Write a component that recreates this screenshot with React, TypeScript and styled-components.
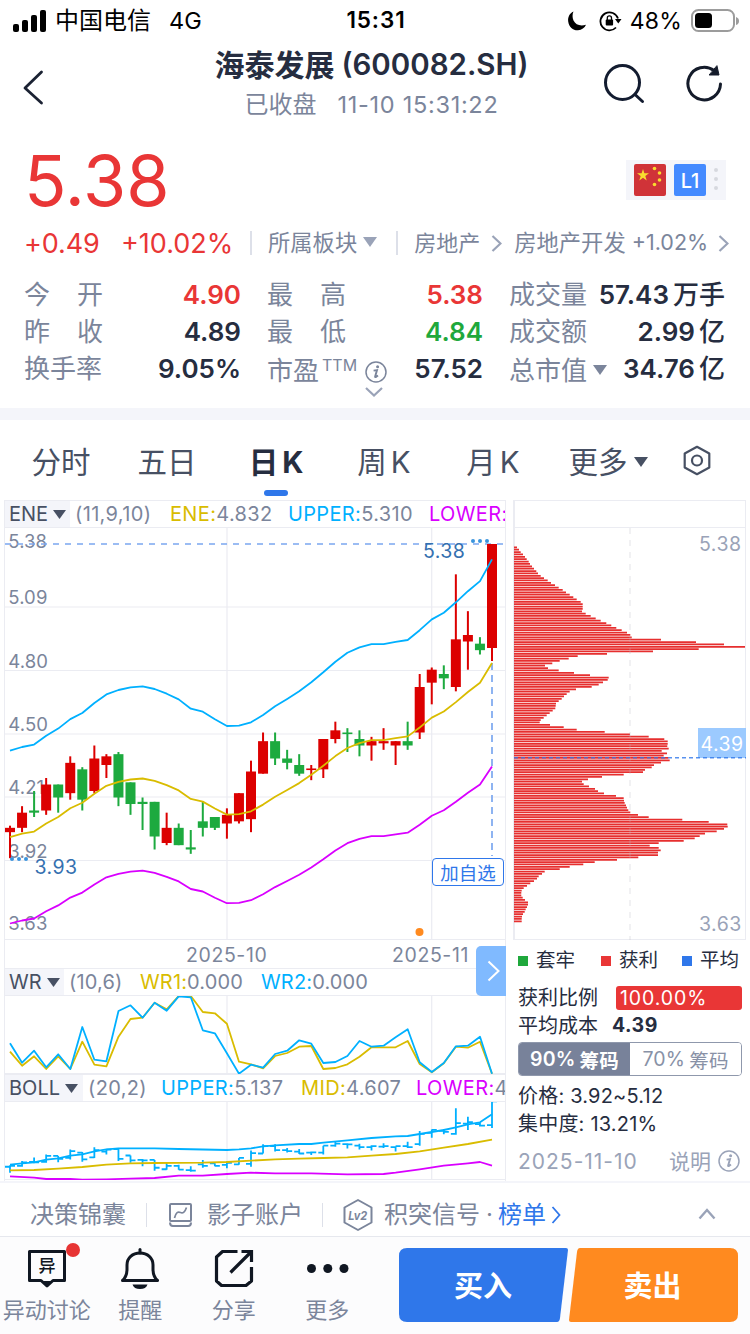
import React from 'react';
import styled, { createGlobalStyle } from 'styled-components';

const c = {
  ink: '#262d40',
  slate: '#475063',
  mute: '#7b859b',
  faint: '#9aa3b8',
  red: '#e93636',
  green: '#1fa83c',
  blue: '#2f77ea',
  cyan: '#00b0ff',
  gold: '#d9bc00',
  pink: '#d900ff',
  candleRed: '#dc0000',
  candleGreen: '#1daa3f',
  line: '#ebecf2',
  band: '#f4f5fa',
};

const Global = createGlobalStyle`
  * { box-sizing: border-box; }
  body { margin: 0; background: #fff; }
  svg { display: block; flex: none; }
`;

const Screen = styled.div`
  width: 750px;
  height: 1334px;
  display: flex;
  flex-direction: column;
  overflow: hidden;
  background: #fff;
  color: ${c.ink};
  font-family: Inter, 'Noto Sans CJK SC', sans-serif;
`;

const Label = styled.span<{ $size: number; $color?: string; $weight?: number; $ls?: number; $ml?: number; $w?: number; $dy?: number }>`
  font-size: ${p => p.$size}px;
  line-height: 1;
  color: ${p => p.$color ?? c.ink};
  font-weight: ${p => p.$weight ?? 400};
  letter-spacing: ${p => p.$ls ?? 0}px;
  margin-left: ${p => p.$ml ?? 0}px;
  margin-top: ${p => p.$dy ?? 0}px;
  ${p => (p.$w ? `width: ${p.$w}px;` : '')}
  flex: none;
  white-space: pre;
`;

const StatusBar = styled.header`
  height: 42px;
  flex: none;
  display: grid;
  grid-template-columns: 1fr auto 1fr;
  align-items: center;
  padding: 0 11px 1px 13px;
`;
const StatusSide = styled.div<{ $end?: boolean }>`
  display: flex;
  align-items: center;
  justify-content: ${p => (p.$end ? 'flex-end' : 'flex-start')};
`;

const TitleBar = styled.div`
  height: 88px;
  flex: none;
  display: flex;
  align-items: flex-start;
  padding-left: 22px;
`;
const TitleBlock = styled.div`
  width: 330px;
  margin-left: 163px;
  display: flex;
  flex-direction: column;
  align-items: center;
  padding: 6px 1px 0 0;
`;
const TitleLine = styled.div<{ $h: number }>`
  display: flex;
  align-items: center;
  justify-content: center;
  height: ${p => p.$h}px;
`;
const IconSlot = styled.div<{ $ml?: number; $mt?: number }>`
  margin-left: ${p => p.$ml ?? 0}px;
  margin-top: ${p => p.$mt ?? 0}px;
  flex: none;
`;

const Quote = styled.section`
  height: 278px;
  flex: none;
  padding: 16px 24px 0;
`;
const PriceRow = styled.div`
  height: 68px;
  display: flex;
  align-items: center;
  justify-content: space-between;
`;
const BadgeBox = styled.div`
  width: 100px;
  height: 40px;
  background: ${c.band};
  display: flex;
  align-items: center;
  gap: 8px;
  padding-left: 8px;
`;
const LevelBadge = styled.div`
  width: 32px;
  height: 32px;
  border-radius: 2px;
  background: #448aff;
  color: #fff;
  font-size: 20px;
  font-weight: 500;
  padding-top: 1px;
  display: flex;
  align-items: center;
  justify-content: center;
`;
const ChangeRow = styled.div`
  height: 30px;
  margin-top: 14px;
  display: flex;
  align-items: center;
`;
const Divider = styled.i<{ $ml: number; $w?: number }>`
  width: ${p => p.$w ?? 2}px;
  height: 24px;
  margin-left: ${p => p.$ml}px;
  background: #dde0e9;
  flex: none;
`;
const StatGrid = styled.div`
  display: grid;
  grid-template-columns: 217px 216px 217px;
  column-gap: 26px;
  grid-auto-rows: 37px;
  margin-top: 18px;
`;
const Stat = styled.div`
  display: flex;
  align-items: center;
  justify-content: space-between;
`;
const StatName = styled.span<{ $drop?: boolean }>`
  width: 79px;
  display: flex;
  align-items: center;
  justify-content: space-between;
  white-space: nowrap;
  font-size: 26px;
  line-height: 1;
  color: ${c.mute};
  padding-top: ${p => (p.$drop ? 5 : 0)}px;
`;
const StatValue = styled.span<{ $color?: string }>`
  font-size: 26px;
  line-height: 1;
  font-weight: 600;
  color: ${p => p.$color ?? c.ink};
  white-space: nowrap;
  & > em { font-style: normal; font-weight: 500; margin: 0 1px 0 4px; }
`;
const Sup = styled.sup`
  font-size: 16px;
  line-height: 1;
  margin: -12px 0 0 3px;
  vertical-align: baseline;
`;
const ExpandRow = styled.div`
  display: flex;
  justify-content: center;
  padding-right: 2px;
`;
const Band = styled.div`
  height: 12px;
  flex: none;
  background: ${c.band};
`;

const Tabs = styled.nav`
  height: 80px;
  flex: none;
  display: flex;
  padding: 0 0 0 31px;
`;
const Tab = styled.div<{ $active?: boolean; $w: number; $mr: number }>`
  width: ${p => p.$w}px;
  margin-right: ${p => p.$mr}px;
  height: 76px;
  padding-top: 26.500px;
  display: flex;
  flex-direction: column;
  align-items: center;
  justify-content: space-between;
  font-size: 29.500px;
  line-height: 30px;
  white-space: nowrap;
  color: ${p => (p.$active ? c.ink : c.slate)};
  font-weight: ${p => (p.$active ? 700 : 400)};
  & > i { width: 24px; height: 6px; border-radius: 3px; background: ${c.blue}; }
`;
const TabText = styled.span<{ $gap?: number }>`
  display: flex;
  align-items: center;
  gap: ${p => p.$gap ?? 4}px;
`;

const Charts = styled.main`
  height: 681px;
  flex: none;
  display: flex;
  padding-left: 4px;
`;
const KColumn = styled.div`
  width: 502px;
  border-left: 1px solid ${c.line};
  border-right: 1px solid ${c.line};
  flex: none;
`;
const Indicator = styled.div<{ $ls: number }>`
  height: 28px;
  display: flex;
  align-items: center;
  overflow: hidden;
  border-top: 1px solid ${c.line};
  border-bottom: 1px solid ${c.line};
  font-size: 20px;
  letter-spacing: ${p => p.$ls}px;
  white-space: nowrap;
  color: ${c.mute};
`;
const IndicatorPick = styled.div<{ $w: number }>`
  width: ${p => p.$w}px;
  height: 100%;
  background: ${c.band};
  color: ${c.slate};
  display: flex;
  align-items: center;
  gap: 5px;
  padding-left: 4px;
  flex: none;
  letter-spacing: 0;
`;
const Param = styled.span<{ $w: number }>`
  margin-left: 5px;
  width: ${p => p.$w}px;
  flex: none;
`;
const Reading = styled.span<{ $color: string; $w?: number }>`
  ${p => (p.$w ? `width: ${p.$w}px;` : '')}
  flex: none;
  & > b { font-weight: 400; color: ${p => p.$color}; }
`;
const DateAxis = styled.div`
  height: 28px;
  padding-top: 3px;
  display: flex;
  align-items: center;
  position: relative;
`;
const NextButton = styled.div`
  position: absolute;
  right: -1px;
  top: 6px;
  width: 30px;
  height: 50px;
  border-radius: 5px 0 0 5px;
  background: #80baff;
  display: flex;
  align-items: center;
  justify-content: center;
  padding-left: 4px;
`;
const ChartFrame = styled.div`
  position: relative;
`;
const AddButton = styled.div`
  position: absolute;
  right: 1px;
  top: 330px;
  width: 72px;
  height: 28px;
  border: 1px solid ${c.blue};
  border-radius: 4px;
  background: #fff;
  color: ${c.blue};
  font-size: 18.5px;
  line-height: 29px;
  text-align: center;
  white-space: nowrap;
`;

const ChipColumn = styled.aside`
  width: 234px;
  margin-left: 7px;
  flex: none;
`;
const ChipHead = styled.div`
  height: 28px;
  width: 233px;
  border: 1px solid ${c.line};
  border-width: 1px 1px 1px 2px;
`;
const Legend = styled.div`
  display: flex;
  height: 41px;
  align-items: center;
  padding: 1px 0 0 5px;
`;
const Swatch = styled.i<{ $color: string; $ml?: number }>`
  width: 10px;
  height: 10px;
  margin-left: ${p => p.$ml ?? 0}px;
  background: ${p => p.$color};
`;
const ChipRow = styled.div<{ $h: number }>`
  height: ${p => p.$h}px;
  padding-left: 5px;
  display: flex;
  align-items: center;
`;
const ProfitBar = styled.div`
  width: 126px;
  height: 24px;
  margin-left: 17px;
  border-radius: 3px;
  background: ${c.red};
  color: #fff;
  font-size: 19.5px;
  line-height: 25px;
  padding-left: 4px;
  letter-spacing: 0.9px;
`;
const Toggle = styled.div`
  display: flex;
  width: 224px;
  height: 34px;
  margin: 5px 0 6px 5px;
  border: 1px solid #8f98ac;
  border-radius: 4px;
  overflow: hidden;
`;
const ToggleHalf = styled.div<{ $on?: boolean }>`
  flex: 1;
  display: flex;
  align-items: center;
  justify-content: center;
  background: ${p => (p.$on ? '#78829a' : '#fff')};
  color: ${p => (p.$on ? '#fff' : '#8891a6')};
  font-weight: ${p => (p.$on ? 600 : 400)};
  font-size: 19.5px;
  letter-spacing: 0.2px;
  gap: 4px;
  white-space: nowrap;
`;

const StrategyBar = styled.div`
  height: 55px;
  flex: none;
  display: flex;
  align-items: center;
  padding: 11px 0 0 30px;
  border-top: 2px solid ${c.band};
`;
const ActionBar = styled.footer`
  height: 98px;
  flex: none;
  border-top: 1px solid #e6e8ee;
  background: #fcfcfd;
  display: flex;
`;
const Action = styled.div`
  width: 93.5px;
  padding-top: 10px;
  display: flex;
  flex-direction: column;
  align-items: center;
  gap: 7px;
  font-size: 22px;
  line-height: 24px;
  color: ${c.mute};
  white-space: nowrap;
  & > svg { overflow: visible; }
`;
const TradeButtons = styled.div`
  display: grid;
  width: 339px;
  height: 74px;
  margin: 11px 0 0 25px;
  & > * { grid-area: 1 / 1; }
`;
const TradeNames = styled.div`
  display: grid;
  grid-template-columns: 168px 171px;
  align-items: center;
  justify-items: center;
  color: #fff;
  font-size: 29px;
  font-weight: 600;
  padding-bottom: 2px;
`;

/* [open, close, high, low] in cents */
const candles: number[][] = [
  [405, 407, 408, 393], [407, 414, 417, 405], [415, 414, 424, 412], [415, 427, 430, 413], [427, 421, 427, 414],
  [423, 437, 440, 420], [434, 420, 435, 415], [424, 439, 445, 423], [436, 440, 441, 430], [441, 421, 442, 417],
  [428, 418, 428, 413], [419, 418, 421, 406], [419, 403, 419, 397], [400, 407, 414, 399], [407, 399, 409, 399],
  [398, 397, 406, 395], [410, 407, 419, 403], [412, 407, 412, 406], [409, 413, 416, 402], [410, 423, 423, 409],
  [411, 433, 438, 405], [432, 447, 451, 432], [447, 439, 451, 436], [439, 437, 443, 434], [436, 432, 441, 431],
  [434, 434.4, 436, 429], [434, 448, 448, 430], [448, 452, 456, 446], [451, 450.5, 453, 442], [448, 445, 452, 440],
  [445, 447, 449, 438], [446, 447, 453, 443], [445, 447, 447, 436], [447, 445, 456, 443], [451, 472, 478, 448],
  [474, 480, 481, 464], [478, 476, 482, 471], [472, 494, 524, 470], [493, 496, 507, 480], [492, 489, 495, 487],
  [490, 538, 538, 484],
];
const eneUpper = [
  442.6, 444.3, 445.4, 449.5, 452.8, 457.2, 460, 464.6, 468.6, 470.6, 471.8, 472.3, 471.1, 468.9, 466.3, 462, 460.6,
  457.1, 454, 454.2, 455.7, 459.1, 463.1, 466.5, 470, 474.2, 478.8, 483.7, 487.8, 490.3, 491.8, 491.8, 492.8, 493.7,
  498.2, 503.2, 506.3, 511.1, 516.2, 520.9, 530.9,
];
/* both WR series use thirds of a pixel below the panel top */
const wr1 = [
  167, 209, 181, 219, 181, 219, 137, 206, 211, 122, 69, 65, 20, 40, 0, 0, 48, 52, 83, 197, 205, 217, 180, 171, 152, 150,
  219, 216, 205, 182, 154, 154, 154, 135, 204, 229, 202, 152, 155, 137, 233,
];
const wr2 = [
  142, 200, 164, 214, 175, 219, 93, 191, 196, 45, 28, 65, 20, 44, 1, 4, 103, 112, 172, 233, 206, 215, 174, 164, 133, 143,
  201, 198, 180, 135, 152, 149, 124, 100, 199, 228, 201, 151, 149, 122, 233,
];
/* [candle index, offset] knots */
const bollUpper = [[0, 188], [1, 184], [2, 181], [3, 173], [4, 169], [5, 161], [6, 157], [7, 148], [8, 142], [9, 139], [12, 139], [14, 141], [18, 144], [19, 142], [20, 139], [21, 133], [22, 130], [24, 126], [25, 126], [26, 122], [28, 115], [30, 108], [32, 103], [33, 102], [34, 96], [36, 84], [37, 76], [38, 67], [39, 61], [40, 37]];
const bollMid = [[0, 205], [2, 204], [4, 200], [6, 195], [8, 188], [10, 184], [12, 183], [16, 182], [18, 180], [20, 176], [22, 172], [24, 170], [26, 168], [28, 166], [30, 161], [32, 156], [34, 148], [36, 137], [38, 126], [40, 113]];
const bollLow = [[0, 223], [2, 227], [3, 231], [5, 231], [6, 233], [8, 232], [10, 230], [12, 228], [14, 221], [16, 221], [18, 216], [20, 212], [22, 214], [25, 214], [28, 217], [31, 216], [32, 212], [34, 202], [36, 191], [38, 184], [39, 180], [40, 191]];

const chips = [
  36, 42, 47, 54, 60, 65, 71, 75, 81, 87, 94, 99, 107, 117, 128, 138, 150, 161, 173, 183, 194, 205, 215, 227, 233, 233,
  233, 231, 242, 257, 272, 287, 304, 319, 334, 350, 366, 376, 380, 468, 573, 657, 720, 581, 444, 306, 218, 191, 164, 142,
  120, 129, 161, 207, 255, 311, 308, 294, 281, 260, 213, 194, 185, 177, 170, 161, 153, 152, 151, 143, 134, 125, 116, 107,
  104, 135, 176, 215, 299, 375, 431, 478, 488, 488, 487, 491, 470, 486, 476, 490, 494, 468, 447, 440, 420, 414, 356, 291,
  249, 231, 236, 252, 270, 279, 297, 333, 356, 357, 359, 363, 366, 370, 376, 399, 431, 532, 611, 667, 668, 657, 635, 600,
  584, 569, 536, 461, 434, 461, 467, 459, 459, 400, 336, 269, 235, 194, 164, 119, 111, 101, 96, 87, 76, 66, 56, 50, 49,
  49, 53, 60, 69, 69, 66, 62, 59, 54, 51, 50, 50,
];

const X = (i: number) => 5 + 12.05 * i;
const Y = (v: number) => 16 + (538 - v) * 2.1667;
const poly = (pts: number[][]) => pts.map(([x, y]) => `${x.toFixed(1)},${y.toFixed(1)}`).join(' ');

function Triangle({ w = 14, h = 10, color = c.slate }: { w?: number; h?: number; color?: string }) {
  return (
    <svg width={w} height={h} viewBox="0 0 14 10" preserveAspectRatio="none">
      <path d="M0 0H14L7 10Z" fill={color} />
    </svg>
  );
}

function Chevron({ w, h, color, sw = 2.2 }: { w: number; h: number; color: string; sw?: number }) {
  return (
    <svg width={w} height={h} viewBox={`0 0 ${w} ${h}`} fill="none" stroke={color} strokeWidth={sw}>
      <path d={`M1.5 1L${w - 1.5} ${h / 2}L1.5 ${h - 1}`} />
    </svg>
  );
}

function InfoIcon({ color }: { color: string }) {
  return (
    <svg width="22" height="22" viewBox="0 0 22 22" fill="none" stroke={color}>
      <circle cx="11" cy="11" r="10" strokeWidth="1.5" />
      <circle cx="12.6" cy="5.8" r="1.5" fill={color} stroke="none" />
      <path d="M8.6 9.6L12 9.1L10.1 15.8Q10 16.8 13 14.6" strokeWidth="1.9" />
    </svg>
  );
}

function MainChart() {
  const line = (k: number) => poly(eneUpper.map((v, i) => [X(i), Y((v / 1.11) * k)]));
  return (
    <svg width="500" height="412" viewBox="0 0 500 412" fontFamily="Inter, sans-serif">
      <g stroke={c.line} strokeWidth="1.2">
        {[79, 142.5, 206, 269, 332.5, 411.5].map(y => <path key={y} d={`M0 ${y}H500`} />)}
        <path d="M222 0V412M426.7 0V412" />
      </g>
      <g fontSize="18.5" fill={c.mute} letterSpacing="0.1">
        <text x="3.300" y="19.500">5.38</text>
        <text x="3.300" y="75.500">5.09</text>
        <text x="3.300" y="139.500">4.80</text>
        <text x="3.300" y="202.500">4.50</text>
        <text x="3.300" y="265.500">4.21</text>
        <text x="3.300" y="329.500">3.92</text>
        <text x="3.300" y="401.500">3.63</text>
      </g>
      <path d="M0 16H500" stroke="#7ba7ef" strokeWidth="1.6" strokeDasharray="6 6" />
      <path d="M487 135V328" stroke="#7ba7ef" strokeWidth="1.7" strokeDasharray="7 5" />
      {candles.map(([o, cl, h, l], i) => {
        const color = cl >= o ? c.candleRed : c.candleGreen;
        const top = Y(Math.max(o, cl));
        const height = Math.max(1.6, Math.abs(cl - o) * 2.1667);
        return (
          <g key={i} fill={color}>
            <rect x={X(i) - 1} y={Y(h)} width="2" height={Y(l) - Y(h)} />
            <rect x={X(i) - 5} y={top} width="10" height={height} />
          </g>
        );
      })}
      <g fill="none" strokeWidth="1.8" strokeLinejoin="round">
        <polyline points={line(1.11)} stroke={c.cyan} />
        <polyline points={line(1.01)} stroke={c.gold} />
        <polyline points={line(0.91)} stroke={c.pink} />
      </g>
      <g fill="#3a94dd">
        {[7, 14, 21].map(x => <circle key={x} cx={x} cy="331" r="2" />)}
        {[468, 475, 482].map(x => <circle key={x} cx={x} cy="13" r="2" />)}
      </g>
      <g fontSize="19.5" fill="#3470b0" letterSpacing="0.4">
        <text x="29.500" y="346">3.93</text>
        <text x="418" y="30">5.38</text>
      </g>
      <circle cx="414.500" cy="404" r="4" fill="#ff8a1f" />
    </svg>
  );
}

function SubGrid() {
  return <path d="M222 0V78M426.700 0V78M0 77.500H500" stroke={c.line} strokeWidth="1.2" />;
}

function WrChart() {
  return (
    <svg width="500" height="78" viewBox="0 0 500 78">
      <SubGrid />
      <g fill="none" strokeWidth="1.8" strokeLinejoin="round">
        <polyline points={poly(wr1.map((v, i) => [X(i), v / 3]))} stroke={c.gold} />
        <polyline points={poly(wr2.map((v, i) => [X(i), v / 3]))} stroke={c.cyan} />
      </g>
    </svg>
  );
}

function BollChart() {
  const by = (v: number) => (212 - (v - 393) * 1.473) / 3;
  const knots = (k: number[][]) => poly(k.map(([i, v]) => [X(i), v / 3]));
  const bars = candles
    .map(([o, cl, h, l], i) => `M${X(i)} ${by(h)}V${by(l)}M${X(i) - 5} ${by(o)}H${X(i)}M${X(i)} ${by(cl)}H${X(i) + 5}`)
    .join('');
  return (
    <svg width="500" height="78" viewBox="0 0 500 78">
      <SubGrid />
      <g fill="none" strokeWidth="1.8" strokeLinejoin="round">
        <path d={bars} stroke={c.cyan} />
        <polyline points={knots(bollUpper)} stroke={c.cyan} />
        <polyline points={knots(bollMid)} stroke={c.gold} />
        <polyline points={knots(bollLow)} stroke={c.pink} />
      </g>
    </svg>
  );
}

function ChipChart() {
  return (
    <svg width="234" height="412" viewBox="0 0 234 412" fontFamily="Inter, sans-serif">
      <path d="M1 0V412" stroke={c.line} strokeWidth="2" />
      <path d="M232.500 0V412M0 411.500H233" stroke={c.line} />
      <path d={chips.map((v, i) => `M1 ${(19.35 + i * 2.3667).toFixed(2)}h${((v - 27) / 3).toFixed(1)}`).join('')} stroke="#e62f2f" strokeWidth="1.75" />
      <path d="M117 0V412" stroke="#b8b8c4" strokeOpacity="0.2" strokeWidth="2" strokeDasharray="6 6" />
      <rect x="185" y="200" width="48" height="30" fill="#9ccaff" />
      <path d="M1 229.700H233" stroke="#2f77ea" strokeOpacity="0.8" strokeWidth="1.5" strokeDasharray="4 3" />
      <g fontSize="19.5" letterSpacing="0.5">
        <text x="186" y="23" fill={c.faint}>5.38</text>
        <text x="186" y="403" fill={c.faint}>3.63</text>
        <text x="187.500" y="222.500" fill="#fff">4.39</text>
      </g>
    </svg>
  );
}

export default function App() {
  return (
    <Screen>
      <Global />
      <StatusBar>
        <StatusSide>
          <svg width="33" height="22" viewBox="0 0 33 22">
            <rect x="0" y="14" width="6" height="8" rx="2" />
            <rect x="9" y="10" width="6" height="12" rx="2" />
            <rect x="18" y="5" width="6" height="17" rx="2" />
            <rect x="27" y="0" width="6" height="22" rx="2" />
          </svg>
          <Label $size={24} $color="#000" $ml={9} $dy={1}>中国电信</Label>
          <Label $size={23.5} $color="#000" $ml={18}>4G</Label>
        </StatusSide>
        <Label $size={22.5} $color="#000" $weight={600} $ls={0.9}>15:31</Label>
        <StatusSide $end>
          <svg width="20" height="20" viewBox="0 0 20 20">
            <path d="M6.500 0.500C2.500 2.500 0.700 6 1.200 10.500C2 16 6 19.500 11 19.300C14.800 19 17.600 17 19 13.800C13.500 15.600 8.500 14 6.500 9.600C5.200 6.500 5.300 3.200 6.500 0.500Z" />
          </svg>
          <IconSlot $ml={12}>
            <svg width="23" height="22" viewBox="0 0 23 22" fill="none" stroke="#000" strokeWidth="1.800">
              <path d="M17 17.500A9 9 0 1 1 19 8.500" />
              <path d="M16 9H22.500L19.300 13.500Z" fill="#000" stroke="none" />
              <rect x="6.700" y="9.500" width="7.400" height="6" rx="1" fill="#000" stroke="none" />
              <path d="M8.300 10V8A2.100 2.100 0 0 1 12.500 8V10" strokeWidth="1.300" />
            </svg>
          </IconSlot>
          <Label $size={23} $color="#000" $ml={8} $ls={0.2} $dy={1}>48%</Label>
          <IconSlot $ml={9}>
            <svg width="48" height="24" viewBox="0 0 48 24">
              <rect x="1" y="1" width="42" height="21" rx="6.500" fill="none" stroke="#9c9c9c" strokeWidth="2" />
              <path d="M45 8Q48 9 48 12T45 16Z" fill="#9c9c9c" />
              <rect x="4" y="4" width="17" height="15" rx="3.500" />
            </svg>
          </IconSlot>
        </StatusSide>
      </StatusBar>

      <TitleBar>
        <IconSlot $mt={28}>
          <svg width="22" height="36" viewBox="0 0 22 36" fill="none" stroke="#1b2233" strokeWidth="2.800" strokeLinecap="round" strokeLinejoin="round">
            <path d="M19.500 2L3 18L19.500 33" />
          </svg>
        </IconSlot>
        <TitleBlock>
          <TitleLine $h={34}>
            <Label $size={30} $weight={600}>海泰发展</Label>
            <Label $size={29.5} $weight={600} $ml={7}>(600082.SH)</Label>
          </TitleLine>
          <TitleLine $h={46}>
            <Label $size={24} $color={c.mute}>已收盘</Label>
            <Label $size={23.5} $color={c.mute} $ml={21} $ls={0.7}>11-10 15:31:22</Label>
          </TitleLine>
        </TitleBlock>
        <IconSlot $ml={67} $mt={22}>
          <svg width="42" height="40" viewBox="0 0 42 40" fill="none" stroke="#131c30" strokeWidth="3" strokeLinecap="round">
            <circle cx="18.500" cy="18.500" r="17" />
            <path d="M31 30.500L38.500 37.500" />
          </svg>
        </IconSlot>
        <IconSlot $ml={39} $mt={22}>
          <svg width="38" height="38" viewBox="0 0 38 38" fill="none" stroke="#141b2a" strokeWidth="3" strokeLinecap="round">
            <path d="M35.500 20A16.300 16.300 0 1 1 29 6.500" />
            <path d="M32 2L34 11H24.500Z" fill="#141b2a" strokeWidth="1" strokeLinejoin="round" />
          </svg>
        </IconSlot>
      </TitleBar>

      <Quote>
        <PriceRow>
          <Label $size={70} $color={c.red} $dy={2}>5.38</Label>
          <BadgeBox>
            <svg width="32" height="32" viewBox="0 0 32 32">
              <rect width="32" height="32" rx="2" fill="#d03338" />
              <g fill="#f9dc2e">
                <path d="M9 5L10.400 9.300H15L11.300 12L12.700 16.500L9 13.800L5.300 16.500L6.700 12L3 9.300H7.600Z" />
                <circle cx="20.500" cy="4.500" r="1.800" />
                <circle cx="25.500" cy="9" r="1.800" />
                <circle cx="25.500" cy="16" r="1.800" />
                <circle cx="20.500" cy="20.500" r="1.800" />
              </g>
            </svg>
            <LevelBadge>L1</LevelBadge>
            <svg width="4" height="24" viewBox="0 0 4 24" fill="#d6d8de">
              <circle cx="2" cy="2" r="2" /><circle cx="2" cy="11" r="2" /><circle cx="2" cy="20" r="2" />
            </svg>
          </BadgeBox>
        </PriceRow>
        <ChangeRow>
          <Label $size={27} $color={c.red} $w={97} $ls={-0.1}>+0.49</Label>
          <Label $size={27} $color={c.red} $w={112}>+10.02%</Label>
          <Divider $ml={17} />
          <Label $size={22.3} $color={c.mute} $ml={16}>所属板块</Label>
          <IconSlot $ml={6} $mt={-2}><Triangle color={c.faint} /></IconSlot>
          <Divider $ml={19} />
          <Label $size={22} $color={c.mute} $ml={16}>房地产</Label>
          <IconSlot $ml={11}><Chevron w={11} h={17} color={c.faint} /></IconSlot>
          <Label $size={22.3} $color={c.mute} $ml={12}>房地产开发</Label>
          <Label $size={21.5} $color={c.mute} $ml={6} $w={77}>+1.02%</Label>
          <IconSlot $ml={9}><Chevron w={11} h={17} color={c.faint} /></IconSlot>
        </ChangeRow>
        <StatGrid>
          <Stat><StatName><span>今</span><span>开</span></StatName><StatValue $color={c.red}>4.90</StatValue></Stat>
          <Stat><StatName><span>最</span><span>高</span></StatName><StatValue $color={c.red}>5.38</StatValue></Stat>
          <Stat><StatName>成交量</StatName><StatValue>57.43<em>万手</em></StatValue></Stat>
          <Stat><StatName><span>昨</span><span>收</span></StatName><StatValue>4.89</StatValue></Stat>
          <Stat><StatName><span>最</span><span>低</span></StatName><StatValue $color={c.green}>4.84</StatValue></Stat>
          <Stat><StatName>成交额</StatName><StatValue>2.99<em>亿</em></StatValue></Stat>
          <Stat><StatName>换手率</StatName><StatValue>9.05%</StatValue></Stat>
          <Stat>
            <StatName $drop>
              <span>市盈</span><Sup>TTM</Sup>
              <IconSlot $ml={8} $mt={2}><InfoIcon color={c.mute} /></IconSlot>
            </StatName>
            <StatValue>57.52</StatValue>
          </Stat>
          <Stat>
            <StatName $drop>
              <span>总市值</span>
              <IconSlot $ml={6} $mt={-3}><Triangle color={c.mute} /></IconSlot>
            </StatName>
            <StatValue>34.76<em>亿</em></StatValue>
          </Stat>
        </StatGrid>
        <ExpandRow>
          <svg width="18" height="10" viewBox="0 0 18 10" fill="none" stroke={c.faint} strokeWidth="2.200">
            <path d="M1 1L9 8.500L17 1" />
          </svg>
        </ExpandRow>
      </Quote>
      <Band />

      <Tabs>
        <Tab $w={60} $mr={47}>分时</Tab>
        <Tab $w={58} $mr={54}>五日</Tab>
        <Tab $w={52} $mr={56} $active><TabText>日<span>K</span></TabText><i /></Tab>
        <Tab $w={52} $mr={57}><TabText>周<span>K</span></TabText></Tab>
        <Tab $w={52} $mr={49}><TabText>月<span>K</span></TabText></Tab>
        <Tab $w={80} $mr={34}><TabText $gap={6}>更多<Triangle /></TabText></Tab>
        <IconSlot $mt={25}>
          <svg width="30" height="31" viewBox="0 0 30 31" fill="none" stroke={c.slate} strokeWidth="2.200" strokeLinejoin="round">
            <path d="M15 1.800L27.300 8.500V22.500L15 29.200L2.700 22.500V8.500Z" />
            <circle cx="15" cy="15.500" r="5" />
          </svg>
        </IconSlot>
      </Tabs>

      <Charts>
        <KColumn>
          <Indicator $ls={0.35}>
            <IndicatorPick $w={65}>ENE<Triangle w={13} h={9} /></IndicatorPick>
            <Param $w={95}>(11,9,10)</Param>
            <Reading $color={c.gold} $w={118}><b>ENE:</b>4.832</Reading>
            <Reading $color={c.cyan} $w={141}><b>UPPER:</b>5.310</Reading>
            <Reading $color={c.pink}><b>LOWER:</b></Reading>
          </Indicator>
          <ChartFrame>
            <MainChart />
            <AddButton>加自选</AddButton>
          </ChartFrame>
          <DateAxis>
            <Label $size={19.5} $color={c.mute} $ml={181} $ls={0.6} $w={206}>2025-10</Label>
            <Label $size={19.5} $color={c.mute} $ls={0.6}>2025-11</Label>
            <NextButton>
              <svg width="13" height="22" viewBox="0 0 13 22" fill="none" stroke="#fff" strokeWidth="2">
                <path d="M1.500 1.500L11.500 11L1.500 20.500" />
              </svg>
            </NextButton>
          </DateAxis>
          <Indicator $ls={0.15}>
            <IndicatorPick $w={59}>WR<Triangle w={13} h={9} /></IndicatorPick>
            <Param $w={71}>(10,6)</Param>
            <Reading $color={c.gold} $w={121}><b>WR1:</b>0.000</Reading>
            <Reading $color={c.cyan}><b>WR2:</b>0.000</Reading>
          </Indicator>
          <WrChart />
          <Indicator $ls={0.35}>
            <IndicatorPick $w={78}>BOLL<Triangle w={13} h={9} /></IndicatorPick>
            <Param $w={73}>(20,2)</Param>
            <Reading $color={c.cyan} $w={140}><b>UPPER:</b>5.137</Reading>
            <Reading $color={c.gold} $w={115}><b>MID:</b>4.607</Reading>
            <Reading $color={c.pink}><b>LOWER:</b>4</Reading>
          </Indicator>
          <BollChart />
        </KColumn>

        <ChipColumn>
          <ChipHead />
          <ChipChart />
          <Legend>
            <Swatch $color={c.green} /><Label $size={19.5} $ml={8}>套牢</Label>
            <Swatch $color={c.red} $ml={26} /><Label $size={19.5} $ml={8}>获利</Label>
            <Swatch $color={c.blue} $ml={24} /><Label $size={19.5} $ml={8}>平均</Label>
          </Legend>
          <ChipRow $h={34}><Label $size={20} $w={81}>获利比例</Label><ProfitBar>100.00%</ProfitBar></ChipRow>
          <ChipRow $h={22}><Label $size={20}>平均成本</Label><Label $size={19.5} $weight={700} $ml={14} $ls={0.5}>4.39</Label></ChipRow>
          <Toggle>
            <ToggleHalf $on><span>90%</span>筹码</ToggleHalf>
            <ToggleHalf><span>70%</span>筹码</ToggleHalf>
          </Toggle>
          <ChipRow $h={28}><Label $size={20} $ls={0.2}>价格: 3.92~5.12</Label></ChipRow>
          <ChipRow $h={28}><Label $size={20} $ls={0.2}>集中度: 13.21%</Label></ChipRow>
          <ChipRow $h={46}>
            <Label $size={21} $color={c.faint} $w={151} $ls={1}>2025-11-10</Label>
            <Label $size={21} $color={c.faint}>说明</Label>
            <IconSlot $ml={7}><InfoIcon color={c.faint} /></IconSlot>
          </ChipRow>
        </ChipColumn>
      </Charts>

      <StrategyBar>
        <Label $size={24} $color={c.mute}>决策锦囊</Label>
        <Divider $ml={20} $w={1} />
        <IconSlot $ml={21}>
          <svg width="26" height="26" viewBox="0 0 26 26" fill="none" stroke={c.mute} strokeWidth="2">
            <rect x="2" y="2" width="21" height="17" rx="1" />
            <path d="M2 20.500Q2 24 5 24H20Q23 24 23 20.500" />
            <path d="M6.500 16C8 10 10 9.500 12.500 10.500C15 11.500 17 10 18.500 5.500" strokeWidth="1.700" />
          </svg>
        </IconSlot>
        <Label $size={24} $color={c.mute} $ml={13}>影子账户</Label>
        <Divider $ml={19} $w={1} />
        <IconSlot $ml={19}>
          <svg width="32" height="34" viewBox="0 0 32 34" fill="none" stroke={c.mute} strokeWidth="2">
            <path d="M16 2L29.500 9.500V24.500L16 32L2.500 24.500V9.500Z" strokeLinejoin="round" />
            <text x="15.700" y="21.500" fontSize="12" fontWeight="700" fontStyle="italic" fontFamily="Inter, sans-serif" textAnchor="middle" textLength="19" lengthAdjust="spacingAndGlyphs" fill={c.mute} stroke="none">Lv2</text>
          </svg>
        </IconSlot>
        <Label $size={24} $color={c.mute} $ml={10}>积突信号</Label>
        <Label $size={24} $color={c.mute} $ml={6} $w={12}>·</Label>
        <Label $size={24} $color={c.blue}>榜单</Label>
        <IconSlot $ml={5}><Chevron w={10} h={18} color={c.blue} sw={1.8} /></IconSlot>
        <IconSlot $ml={137} $mt={-2}>
          <svg width="18" height="12" viewBox="0 0 18 12" fill="none" stroke={c.faint} strokeWidth="2.400">
            <path d="M1.500 10.500L9 2L16.500 10.500" />
          </svg>
        </IconSlot>
      </StrategyBar>

      <ActionBar>
        <Action>
          <svg width="72" height="44" viewBox="0 0 72 44" fill="none" stroke="#101722" strokeWidth="3">
            <path d="M18.500 4.500H53.500V33.500H42L36 39L30 33.500H18.500Z" strokeLinejoin="round" />
            <path d="M31.500 34H40.500L36 39Z" fill="#101722" stroke="none" />
            <text x="36" y="25" fontSize="17" fontWeight="500" fontFamily="'Noto Sans CJK SC', sans-serif" textAnchor="middle" fill="#101722" stroke="none">异</text>
            <circle cx="62" cy="3" r="7" fill="#e73434" stroke="none" />
          </svg>
          异动讨论
        </Action>
        <Action>
          <svg width="44" height="44" viewBox="0 0 44 44" fill="none" stroke="#101722" strokeWidth="3">
            <path d="M4.500 33.500C8.500 30 9 27 9 22V18C9 11 14.500 6 22 6S35 11 35 18V22C35 27 35.500 30 39.500 33.500Z" strokeLinejoin="round" />
            <path d="M22 6V2.500" strokeLinecap="round" />
            <path d="M14.500 37.500H29.500Q28 42 22 42T14.500 37.500Z" fill="#101722" stroke="none" />
          </svg>
          提醒
        </Action>
        <Action>
          <svg width="44" height="44" viewBox="0 0 44 44" fill="none" stroke="#101722" strokeWidth="3.200">
            <path d="M25.500 4.500H10.500L4.500 10V34L9.500 38.500H34L39.500 34V20" strokeLinejoin="round" />
            <path d="M29.500 4.500H39.500V15M38.500 5.500L18.500 25.500" />
          </svg>
          分享
        </Action>
        <Action>
          <svg width="44" height="44" viewBox="0 0 44 44" fill="#101722">
            <circle cx="6.500" cy="21.500" r="4.500" /><circle cx="22.800" cy="21.500" r="4.500" /><circle cx="39" cy="21.500" r="4.500" />
          </svg>
          更多
        </Action>
        <TradeButtons>
          <svg width="339" height="74" viewBox="0 0 339 74">
            <path d="M8 0H167Q169 0 169 2L161 70Q160.500 74 158 74H8Q0 74 0 66V8Q0 0 8 0Z" fill="#2f77ea" />
            <path d="M181 0H331Q339 0 339 8V66Q339 74 331 74H172Q170 74 170 72L178 4Q178.500 0 181 0Z" fill="#ff8a1f" />
          </svg>
          <TradeNames><span>买入</span><span>卖出</span></TradeNames>
        </TradeButtons>
      </ActionBar>
    </Screen>
  );
}
